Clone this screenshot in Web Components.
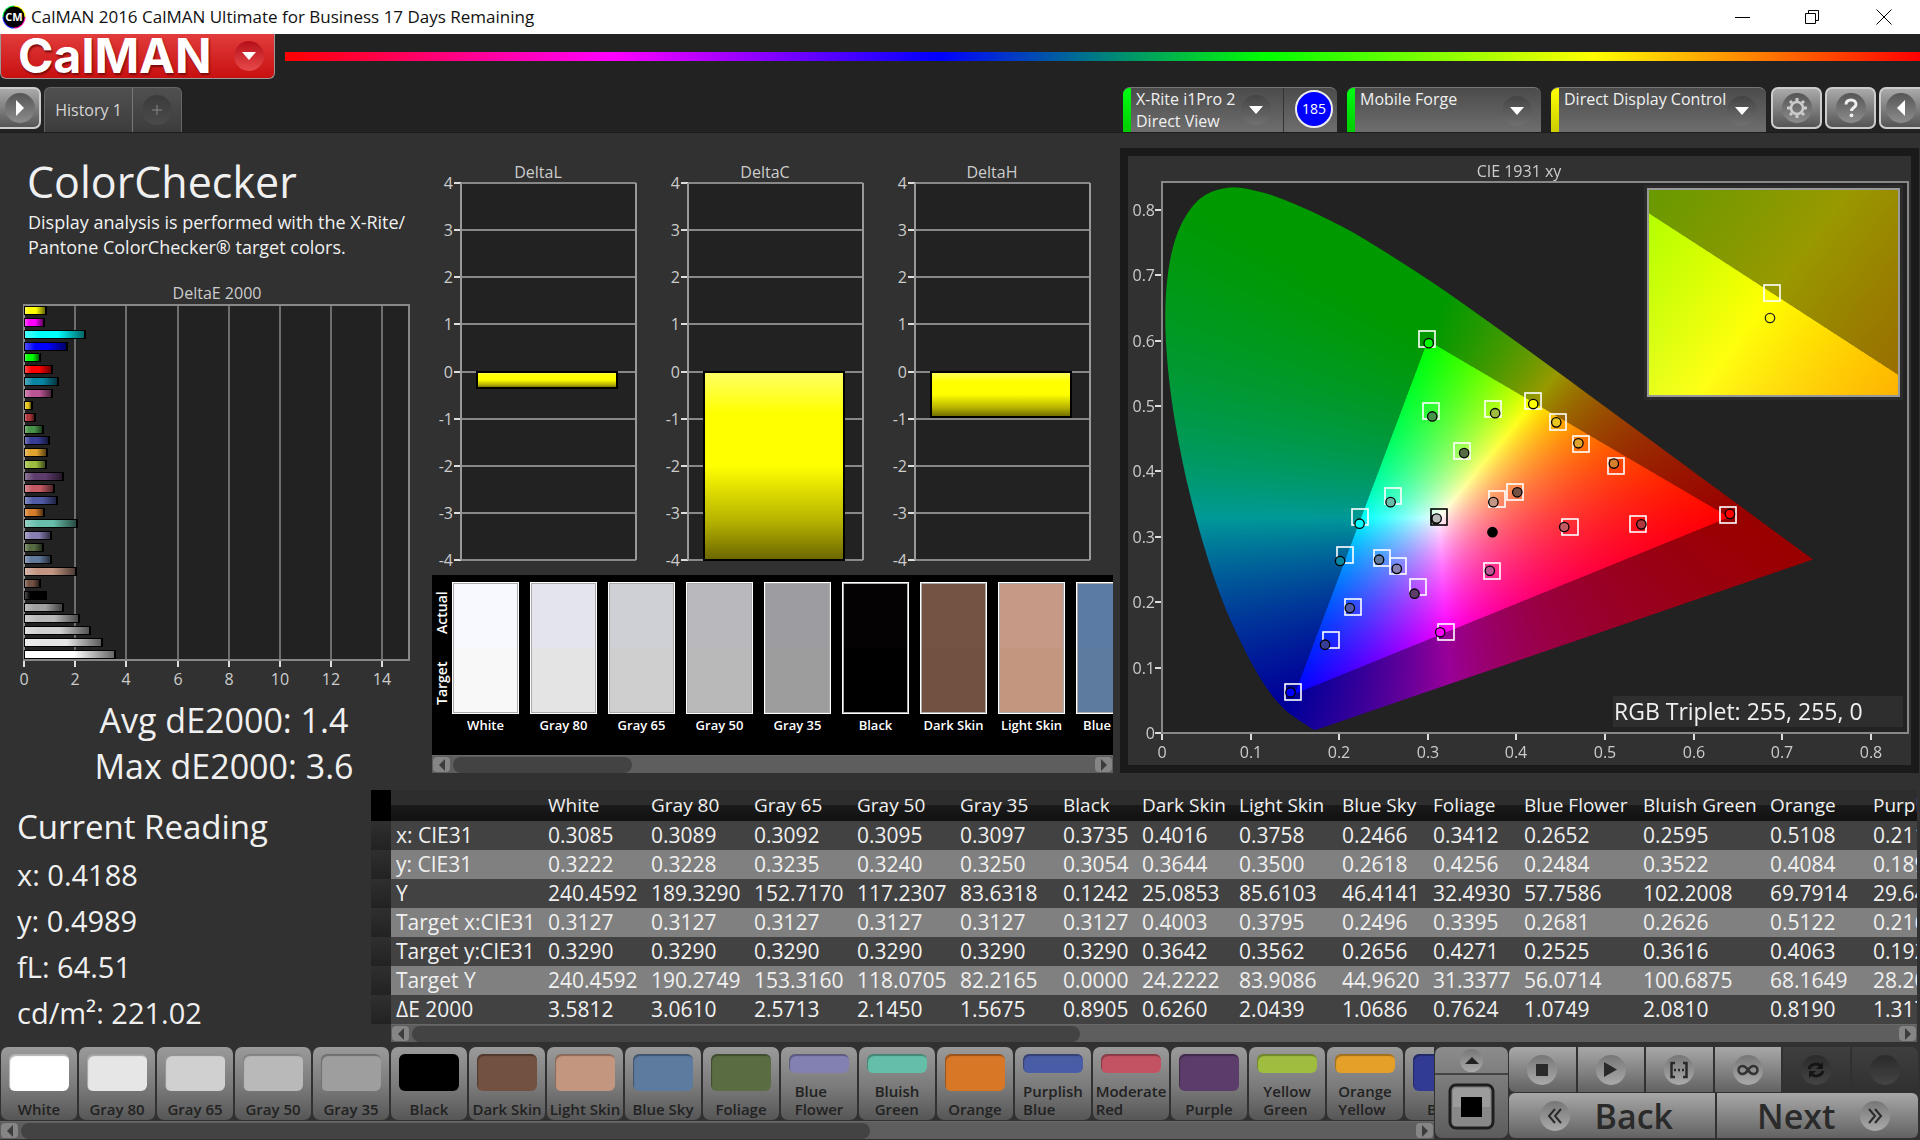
<!DOCTYPE html>
<html lang="en">
<head>
<meta charset="utf-8">
<title>CalMAN 2016 CalMAN Ultimate for Business</title>
<style>
  html, body { margin: 0; height: 100%; }
  body { background: #313131; color: #f0f0f0; font-family: "Open Sans", "Noto Sans", sans-serif; overflow: hidden; }
</style>
</head>
<body>
<cal-app></cal-app>
<script>
const BASE = `
  *, *::before, *::after { box-sizing: border-box; }
  button, select { font: inherit; color: inherit; border: 0; margin: 0; padding: 0; background: none; }
  svg { display: block; }
`;

class CalElement extends HTMLElement {
  connectedCallback() {
    if (this.shadowRoot) return;
    this.attachShadow({ mode: 'open' });
    this.shadowRoot.innerHTML = `<style>${BASE}${this.styles()}</style>${this.markup()}`;
    this.ready();
  }
  styles() { return ''; }
  markup() { return ''; }
  ready() {}
}

const READINGS = {
  names: ['White', 'Gray 80', 'Gray 65', 'Gray 50', 'Gray 35', 'Black', 'Dark Skin', 'Light Skin', 'Blue Sky', 'Foliage', 'Blue Flower', 'Bluish Green', 'Orange', 'Purplish Blue'],
  widths: [103, 103, 103, 103, 103, 79, 97, 103, 91, 91, 119, 127, 103, 120],
  rows: [
    ['x: CIE31', '0.3085', '0.3089', '0.3092', '0.3095', '0.3097', '0.3735', '0.4016', '0.3758', '0.2466', '0.3412', '0.2652', '0.2595', '0.5108', '0.2117'],
    ['y: CIE31', '0.3222', '0.3228', '0.3235', '0.3240', '0.3250', '0.3054', '0.3644', '0.3500', '0.2618', '0.4256', '0.2484', '0.3522', '0.4084', '0.1893'],
    ['Y', '240.4592', '189.3290', '152.7170', '117.2307', '83.6318', '0.1242', '25.0853', '85.6103', '46.4141', '32.4930', '57.7586', '102.2008', '69.7914', '29.6441'],
    ['Target x:CIE31', '0.3127', '0.3127', '0.3127', '0.3127', '0.3127', '0.3127', '0.4003', '0.3795', '0.2496', '0.3395', '0.2681', '0.2626', '0.5122', '0.2162'],
    ['Target y:CIE31', '0.3290', '0.3290', '0.3290', '0.3290', '0.3290', '0.3290', '0.3642', '0.3562', '0.2656', '0.4271', '0.2525', '0.3616', '0.4063', '0.1925'],
    ['Target Y', '240.4592', '190.2749', '153.3160', '118.0705', '82.2165', '0.0000', '24.2222', '83.9086', '44.9620', '31.3377', '56.0714', '100.6875', '68.1649', '28.2051'],
    ['ΔE 2000', '3.5812', '3.0610', '2.5713', '2.1450', '1.5675', '0.8905', '0.6260', '2.0439', '1.0686', '0.7624', '1.0749', '2.0810', '0.8190', '1.3170']
  ]
};

/* ---------- Scroll bar ---------- */
customElements.define('cal-scrollbar', class extends CalElement {
  styles() { return `
    :host { display: flex; align-items: center; height: 18px; padding: 1px; background: #5e5e5e; border-top: 1px solid #686868; }
    button { width: 17px; height: 15px; border-radius: 4px; background: #858585; display: grid; place-items: center; flex: none; }
    .track { flex: 1; height: 16px; margin: 0 3px; }
    .thumb { width: var(--thumb, 30%); height: 16px; border-radius: 8px; background: #434343; }
  `; }
  markup() { return `
    <button aria-label="Scroll left"><svg width="8" height="12"><path d="M7 0v12L1 6z" fill="#3c3c3c"/></svg></button>
    <div class="track"><div class="thumb"></div></div>
    <button aria-label="Scroll right"><svg width="8" height="12"><path d="M1 0v12l6-6z" fill="#3c3c3c"/></svg></button>
  `; }
});

/* ---------- Window title bar ---------- */
customElements.define('cal-titlebar', class extends CalElement {
  styles() { return `
    :host { display: flex; align-items: center; height: 34px; background: #fff; color: #111; font-size: 17px; padding-left: 2px; }
    .name { flex: 1; padding-left: 5px; line-height: 34px; }
    button { width: 70px; height: 34px; display: grid; place-items: center; }
    button:last-child { width: 73px; }
    button svg { stroke: #000; fill: none; }
  `; }
  markup() { return `
    <svg width="24" height="24" viewBox="0 0 24 24" aria-hidden="true">
      <path d="M12 1.500A10.500 10.500 0 0 1 22.500 12" stroke="#ff0" stroke-width="2" fill="none"/>
      <path d="M22.500 12A10.500 10.500 0 0 1 12 22.500" stroke="#f0a" stroke-width="2" fill="none"/>
      <path d="M12 22.500A10.500 10.500 0 0 1 1.500 12" stroke="#22f" stroke-width="2" fill="none"/>
      <path d="M1.500 12A10.500 10.500 0 0 1 12 1.500" stroke="#0e4" stroke-width="2" fill="none"/>
      <circle cx="12" cy="12" r="10.500"/>
      <text x="12" y="16" text-anchor="middle" font-size="11" font-weight="700" fill="#fff">CM</text>
    </svg>
    <span class="name"><slot></slot></span>
    <button aria-label="Minimize"><svg width="16" height="16"><path d="M1 8.500h15"/></svg></button>
    <button aria-label="Restore"><svg width="16" height="16"><path d="M1.500 4.500h10v10h-10zM4.500 4.500v-3h10v10h-3"/></svg></button>
    <button aria-label="Close"><svg width="16" height="16"><path d="M.500.500l15 15M15.500.500l-15 15"/></svg></button>
  `; }
});

/* ---------- Logo strip, workflow tabs and device menus ---------- */
customElements.define('cal-header', class extends CalElement {
  styles() { return `
    :host { display: block; background: #222; }
    .brand { display: flex; align-items: flex-start; gap: 10px; height: 53px; }
    .logo { display: flex; align-items: center; justify-content: space-between; width: 275px; height: 45px; padding: 0 10px 0 17px; border: 1px solid #999; border-top: 0; border-radius: 0 0 6px 6px;
      background: linear-gradient(#e23c3c, #c81010); color: #fff; font: 700 48px/40px Inter, "Open Sans", sans-serif; text-shadow: 1px 2px 2px #7a0a0a; }
    .knob { display: grid; place-items: center; width: 30px; height: 30px; border-radius: 50%; flex: none; background: linear-gradient(#444, #707070); }
    .logo .knob { background: linear-gradient(#b40f18, #e84a4a); }
    .rainbow { flex: 1; height: 9px; margin-top: 18px; background: linear-gradient(90deg, #f00, #f0f, #00f, #0f0, #ff0, #f00); }
    .bar { display: flex; height: 45px; font-size: 16px; line-height: 22px; }
    .sq { width: 51px; height: 42px; display: grid; place-items: center; border: 2px solid #ccc; border-radius: 7px; background: linear-gradient(#aaa, #555); }
    .sq .knob { background: linear-gradient(#555, #8d8d8d); }
    .first { width: 41px; border-left: 0; border-radius: 0 7px 7px 0; margin-right: 3px; }
    .last { width: 41px; border-right: 0; border-radius: 7px 0 0 7px; }
    .tabs { display: flex; border: 1px solid #666; border-bottom: 0; border-radius: 6px 6px 0 0; background: linear-gradient(#505050, #3c3c3c); color: #d5d5d5; }
    .tabs button { width: 87px; }
    .tabs .add { width: 49px; border-left: 1px solid #777; display: grid; place-items: center; }
    .tabs .knob { background: linear-gradient(#3b3b3b, #4b4b4b); }
    .space { flex: 1; }
    .dev { display: flex; height: 45px; border-radius: 7px 7px 0 0; overflow: hidden; border-top: 1px solid #777; background: linear-gradient(#4b4b4b, #6e6e6e); margin-right: 10px; position: relative; }
    .dev::before { content: ""; width: 8px; background: var(--led); flex: none; }
    .meter { display: flex; align-items: center; width: 153px; padding: 0 12px 0 5px; text-align: left; justify-content: space-between; border-right: 1px solid #333; white-space: nowrap; }
    .badge { width: 38px; height: 38px; margin: 2px 0 0 11px; border-radius: 50%; border: 2px solid #eee; background: #00f; font-size: 14px; line-height: 34px; text-align: center; color: #fff; }
    select { appearance: none; width: 100%; height: 22px; padding: 0 5px; line-height: 22px; }
    .dev .over { position: absolute; right: 9px; top: 8px; pointer-events: none; }
    .dev.end { margin-right: 5px; }
    .tools { display: flex; gap: 3px; }
  `; }
  markup() {
    const down = '<span class="knob"><svg width="14" height="10"><path d="M0 1h14L7 9z" fill="#fff"/></svg></span>';
    return `
    <div class="brand">
      <button class="logo">CalMAN${down}</button>
      <div class="rainbow"></div>
    </div>
    <nav class="bar">
      <button class="sq first" aria-label="Show workflow"><span class="knob"><svg width="10" height="16"><path d="M1 0v16l8-8z" fill="#fff"/></svg></span></button>
      <div class="tabs"><button>History 1</button><button class="add" aria-label="Add history"><span class="knob"><svg width="12" height="12"><path d="M6 1v10M1 6h10" stroke="#888"/></svg></span></button></div>
      <span class="space"></span>
      <div class="dev" style="--led:linear-gradient(#0f1,#0c0);width:214px"><button class="meter"><span>X-Rite i1Pro 2<br>Direct View</span>${down}</button><span class="badge">185</span></div>
      <div class="dev" style="--led:linear-gradient(#0f1,#0c0);width:194px"><select aria-label="Source"><option>Mobile Forge</option></select><span class="knob over"><svg width="14" height="10"><path d="M0 1h14L7 9z" fill="#fff"/></svg></span></div>
      <div class="dev end" style="--led:linear-gradient(#ff0,#cc0);width:215px"><select aria-label="Display"><option>Direct Display Control</option></select><span class="knob over"><svg width="14" height="10"><path d="M0 1h14L7 9z" fill="#fff"/></svg></span></div>
      <div class="tools">
        <button class="sq" aria-label="Settings"><span class="knob"><svg width="22" height="22" viewBox="-11 -11 22 22" fill="none" stroke="#ccc"><circle r="6" stroke-width="2.500"/><g stroke-width="3"><path d="M0-7v-3M0 7v3M7 0h3M-7 0h-3M5 5l2 2M-5-5l-2-2M5-5l2-2M-5 5l-2 2"/></g></svg></span></button>
        <button class="sq" aria-label="Help"><span class="knob"><svg width="16" height="20" viewBox="0 0 16 20"><path d="M3 6.500C3 3.500 5 2 8 2s5 1.700 5 4.300C13 9.500 8.500 9.500 8.500 13" fill="none" stroke="#eee" stroke-width="3"/><circle cx="8.500" cy="17.300" r="1.900" fill="#eee"/></svg></span></button>
        <button class="sq last" aria-label="Collapse"><span class="knob"><svg width="10" height="16"><path d="M9 0v16L1 8z" fill="#fff"/></svg></span></button>
      </div>
    </nav>`;
  }
});

/* ---------- Horizontal DeltaE bar chart ---------- */
customElements.define('cal-deltae-chart', class extends CalElement {
  styles() { return `
    :host { display: block; }
    svg { width: 100%; }
    text { font-size: 16px; fill: #ccc; text-anchor: middle; }
  `; }
  markup() {
    const bars = [['#ffff00', .88], ['#ff00ff', .82], ['#00ffff', 2.43], ['#0000ff', 1.7], ['#00ff00', .66], ['#ff0000', 1.15], ['#0885a1', 1.38], ['#bb5695', 1.15], ['#e7c71f', .37], ['#af363c', .48], ['#469449', .8], ['#383d96', 1.03], ['#e0a32e', .95], ['#9dbc40', .9], ['#5e3c6c', 1.58], ['#c15a63', 1.22], ['#505ba6', 1.34], ['#d67e2c', .82], ['#67bdaa', 2.12], ['#8580b1', 1.1], ['#576c43', .78], ['#627a9d', 1.1], ['#c29682', 2.08], ['#735244', .66], ['#000000', .89], ['#a0a0a0', 1.58], ['#b9b9b9', 2.18], ['#d0d0d0', 2.6], ['#e6e6e6', 3.08], ['#ffffff', 3.58]];
    let s = '<rect x="24" y="26" width="385" height="355" fill="#222" stroke="#888" stroke-width="2"/>';
    for (let v = 0; v <= 14; v += 2) {
      const x = Math.round(24 + v * 25.6);
      if (v) s += `<path d="M${x} 26V381" stroke="#888" stroke-width="1.500"/>`;
      s += `<path d="M${x} 382v6" stroke="#ddd" stroke-width="2"/><text x="${x}" y="406">${v}</text>`;
    }
    bars.forEach(([c, v], i) => {
      const y = Math.round(31 + i * 11.86) - 4, w = Math.round(v * 25.6);
      s += `<rect x="24" y="${y}" width="${w}" height="9" fill="#000"/><rect x="25" y="${y + 1}" width="${w - 3}" height="7" fill="${c}"/><rect x="25" y="${y + 1}" width="${w - 3}" height="7" fill="url(#shade)"/>`;
    });
    return `<svg viewBox="0 0 432 412" role="img" aria-label="DeltaE 2000">
      <defs><linearGradient id="shade"><stop offset="0" stop-color="#fff" stop-opacity=".3"/><stop offset=".25" stop-color="#fff" stop-opacity="0"/><stop offset=".55" stop-color="#000" stop-opacity="0"/><stop offset="1" stop-color="#000" stop-opacity=".6"/></linearGradient></defs>
      <text x="217" y="20">DeltaE 2000</text>${s}</svg>`;
  }
});

/* ---------- Vertical delta chart, -4 to 4 ---------- */
customElements.define('cal-delta-chart', class extends CalElement {
  styles() { return `
    :host { display: block; flex: 1; min-width: 0; }
    svg { width: 100%; }
    text { font-size: 16px; fill: #ccc; }
  `; }
  markup() {
    const v = Number(this.getAttribute('value')), name = this.getAttribute('name');
    const y = n => Math.round(211.5 - n * 47.1);
    let s = '';
    for (let n = 4; n >= -4; n--) s += `<path d="M29 ${y(n)}H204" stroke="#888" stroke-width="2"/><path d="M22 ${y(n)}h7" stroke="#ddd" stroke-width="2"/><text x="21" y="${y(n) + 6}" text-anchor="end">${n}</text>`;
    const h = y(Math.max(v, -4)) - y(0);
    return `<svg viewBox="0 0 227 415" role="img" aria-label="${name}">
      <defs><linearGradient id="g" x2="0" y2="1"><stop offset="0" stop-color="#ff6"/><stop offset=".22" stop-color="#ff0"/><stop offset=".5" stop-color="#ff0"/><stop offset=".8" stop-color="#b4b000"/><stop offset="1" stop-color="#6a6600"/></linearGradient></defs>
      <rect x="29" y="23" width="175" height="377" fill="#222"/>
      ${s}<path d="M29 23V400M204 23V400" stroke="#999" stroke-width="2"/>
      <rect x="45" y="${y(0)}" width="140" height="${h}" fill="url(#g)" stroke="#000" stroke-width="2"/>
      <text x="106" y="18" text-anchor="middle">${name}</text></svg>`;
  }
});

/* ---------- Actual / target swatches ---------- */
customElements.define('cal-swatches', class extends CalElement {
  styles() { return `
    :host { display: block; background: #000; }
    .view { display: flex; height: 180px; padding-top: 7px; overflow: hidden; }
    .side { display: flex; flex-direction: column; width: 20px; height: 140px; margin-top: -4px; flex: none; font-size: 14px; font-weight: 600; line-height: 20px; color: #fff; }
    .side span { flex: 1; writing-mode: vertical-rl; transform: rotate(180deg); text-align: center; }
    figure { margin: 0 11px 0 0; width: 67px; flex: none; }
    .chip { height: 132px; border: 1px solid #fff; box-shadow: inset 0 0 0 1px #aaa; }
    figcaption { font-size: 13px; font-weight: 600; line-height: 22px; text-align: center; white-space: nowrap; color: #fff; }
  `; }
  markup() {
    const chips = [['White', '#f8f9ff', '#f8f8f8'], ['Gray 80', '#e4e4ec', '#e4e4e4'], ['Gray 65', '#cfcfd6', '#cfcfcf'], ['Gray 50', '#b8b8bd', '#b9b9b9'], ['Gray 35', '#9d9da1', '#9d9d9d'], ['Black', '#040203', '#000'], ['Dark Skin', '#745342', '#735141'], ['Light Skin', '#c69886', '#c39680'], ['Blue Sky', '#5c7ba4', '#5d7b9e']];
    return `<div class="view"><div class="side"><span>Actual</span><span>Target</span></div>
      ${chips.map(([n, a, t]) => `<figure><div class="chip" style="background:linear-gradient(${a} 50%,${t} 50%)"></div><figcaption>${n}</figcaption></figure>`).join('')}
    </div><cal-scrollbar style="--thumb:28%"></cal-scrollbar>`;
  }
});

/* ---------- CIE 1931 chromaticity chart ---------- */
const LOCUS = [[.1741, .005], [.1714, .0051], [.1689, .0069], [.1644, .0109], [.1566, .0177], [.144, .0297], [.1355, .0399], [.1241, .0578], [.1096, .0868], [.0913, .1327], [.0687, .2007], [.0454, .295], [.0235, .4127], [.0082, .5384], [.0039, .6548], [.0139, .7502], [.0389, .812], [.0743, .8338], [.1142, .8262], [.1547, .8059], [.1929, .7816], [.2296, .7543], [.3016, .6923], [.3731, .6245], [.4441, .5547], [.5125, .4866], [.5752, .4242], [.627, .3725], [.6915, .3083], [.7347, .2653]];

/* Display colour of a chromaticity; outside the Rec.709 gamut it is dimmed. */
function chromaColor(x, y) {
  const X = x / y, Z = (1 - x - y) / y;
  const r = 3.2406 * X - 1.5372 - .4986 * Z, g = -.9689 * X + 1.8758 + .0415 * Z, b = .0557 * X - .204 + 1.057 * Z;
  const k = (Math.min(r, g, b) < 0 ? 153 : 255) / Math.max(r, g, b);
  return [Math.max(0, r * k), Math.max(0, g * k), Math.max(0, b * k)];
}

customElements.define('cal-cie-chart', class extends CalElement {
  styles() { return `
    :host { display: block; background: #313131; border: 8px solid #1a1a1a; }
    .stack { display: grid; }
    .stack > * { grid-area: 1 / 1; width: 100%; }
    .axis text { font-size: 16px; fill: #ccc; }
    .triplet { font-size: 23px; fill: #f0f0f0; }
  `; }
  markup() {
    const px = x => 34 + x * 886, py = y => 577 - y * 654;
    const targets = [[.299, .602], [.304, .493], [.374, .496], [.419, .507], [.447, .476], [.473, .442], [.512, .409], [.339, .431], [.261, .363], [.224, .33], [.378, .358], [.398, .368], [.461, .315], [.537, .319], [.639, .333], [.206, .272], [.248, .267], [.266, .256], [.289, .223], [.373, .248], [.216, .193], [.191, .142], [.32, .155], [.148, .062]];
    const actual = [[.301, .596, '#00ff00'], [.305, .484, '#469449'], [.376, .489, '#9dbc40'], [.419, .503, '#ffff00'], [.445, .475, '#e7c71f'], [.47, .443, '#e0a32e'], [.51, .412, '#d67e2c'], [.341, .428, '#576c43'], [.258, .353, '#67bdaa'], [.223, .32, '#00ffff'], [.374, .353, '#c29682'], [.401, .368, '#735244'], [.309, .327, '#888888'], [.31, .328, '#b9b9b9'], [.373, .307, '#000000'], [.454, .315, '#c15a63'], [.541, .319, '#af363c'], [.641, .335, '#ff0000'], [.201, .263, '#0885a1'], [.245, .265, '#627a9d'], [.265, .251, '#8580b1'], [.285, .213, '#5e3c6c'], [.37, .248, '#bb5695'], [.212, .191, '#505ba6'], [.184, .135, '#383d96'], [.314, .154, '#ff00ff'], [.145, .062, '#0000ff']];
    const box = (x, y, c) => `<rect x="${Math.round(x) - 8}" y="${Math.round(y) - 8}" width="16" height="16" fill="none" stroke="${c}" stroke-width="1.600"/>`;
    let s = '';
    for (let i = 0; i <= 8; i++) {
      const x = Math.round(px(i / 10)), y = Math.round(py(i / 10)), t = i ? '0.' + i : '0';
      s += `<path d="M${x} 578v6M34 ${y}h-7" stroke="#ddd" stroke-width="2"/><text x="${x}" y="602" text-anchor="middle">${t}</text><text x="27" y="${y + 6}" text-anchor="end">${t}</text>`;
    }
    return `<div class="stack">
      <canvas width="1566" height="1218"></canvas>
      <svg viewBox="0 0 783 609" role="img" aria-label="CIE 1931 xy">
        <g class="axis"><text x="391" y="21" text-anchor="middle">CIE 1931 xy</text>${s}</g>
        <rect x="34" y="26" width="746" height="551" fill="none" stroke="#888" stroke-width="2"/>
        ${targets.map(([x, y]) => box(px(x), py(y), '#fff')).join('')}
        ${box(px(.313), py(.33), '#000')}
        ${actual.map(([x, y, c]) => `<circle cx="${px(x)}" cy="${py(y)}" r="4.700" fill="${c}" stroke="#000" stroke-width="1.300"/>`).join('')}
        <rect x="520" y="33" width="251" height="207" fill="none" stroke="#999" stroke-width="2"/>
        ${box(644, 137, '#fff')}<circle cx="642" cy="162" r="4.700" fill="#ff0" stroke="#222" stroke-width="1.300"/>
        <rect x="485" y="540" width="290" height="31" fill="#2e2e2e"/>
        <text class="triplet" x="486" y="564">RGB Triplet: 255, 255, 0</text>
      </svg></div>`;
  }
  ready() {
    const c = this.shadowRoot.querySelector('canvas'), g = c.getContext('2d');
    g.scale(2, 2);
    g.fillStyle = '#222';
    g.fillRect(34, 26, 746, 551);
    const paint = (left, top, w, h, toX, toY) => {
      const layer = document.createElement('canvas');
      layer.width = w * 2; layer.height = h * 2;
      const lc = layer.getContext('2d'), img = lc.createImageData(w * 2, h * 2);
      for (let j = 0, k = 0; j < h * 2; j++) for (let i = 0; i < w * 2; i++, k += 4) {
        const rgb = chromaColor(toX(left + (i + .5) / 2), Math.max(.001, toY(top + (j + .5) / 2)));
        img.data[k] = rgb[0]; img.data[k + 1] = rgb[1]; img.data[k + 2] = rgb[2]; img.data[k + 3] = 255;
      }
      lc.putImageData(img, 0, 0);
      g.drawImage(layer, left, top, w, h);
    };
    const p = LOCUS.map(([x, y]) => [34 + x * 886, 577 - y * 654]);
    g.save();
    g.beginPath();
    g.moveTo(...p[0]);
    for (let i = 0; i < p.length - 1; i++) {
      const a = p[Math.max(0, i - 1)], b = p[i], d = p[i + 1], e = p[Math.min(p.length - 1, i + 2)];
      g.bezierCurveTo(b[0] + (d[0] - a[0]) / 6, b[1] + (d[1] - a[1]) / 6, d[0] - (e[0] - b[0]) / 6, d[1] - (e[1] - b[1]) / 6, d[0], d[1]);
    }
    g.closePath();
    g.clip();
    paint(34, 26, 746, 551, x => (x - 34) / 886, y => (577 - y) / 654);
    g.restore();
    g.fillStyle = '#2b2b2b';
    g.fillRect(516, 29, 259, 215);
    paint(520, 33, 251, 207, x => .4193 + (x - 644) / 4840, y => .5053 - (y - 137) / 3950);
  }
});

/* ---------- Current reading ---------- */
customElements.define('cal-reading', class extends CalElement {
  styles() { return `
    :host { display: block; padding: 15px 0 0 17px; font-size: 29px; line-height: 46px; }
    h2 { margin: 0 0 2px; font-size: 33px; line-height: 46px; font-weight: 400; }
    p { margin: 0; }
  `; }
  markup() { return '<h2>Current Reading</h2><p>x: 0.4188</p><p>y: 0.4989</p><p>fL: 64.51</p><p>cd/m²: 221.02</p>'; }
});

/* ---------- Readings table ---------- */
customElements.define('cal-readings-table', class extends CalElement {
  styles() { return `
    :host { display: block; min-width: 0; padding-top: 1px; }
    .view { overflow: hidden; }
    table { border-collapse: collapse; table-layout: fixed; width: 1617px; font-size: 21px; }
    th, td { padding: 0 0 0 5px; text-align: left; font-weight: 400; white-space: nowrap; overflow: hidden; height: 29px; line-height: 29px; }
    thead th { height: 31px; font-size: 19px; line-height: 31px; background: linear-gradient(#2d2d2d 50%, #1a1a1a 50%, #111); }
    thead td { background: #000; }
    tbody tr { background: #424242; }
    tbody tr:nth-child(even) { background: #808080; }
    tbody td.grip { background: linear-gradient(#2f2f2f, #222); }
    cal-scrollbar { margin-left: 20px; }
  `; }
  markup() {
    return `<div class="view"><table>
      <colgroup><col style="width:20px"><col style="width:152px">${READINGS.widths.map(w => `<col style="width:${w}px">`).join('')}</colgroup>
      <thead><tr><td></td><th></th>${READINGS.names.map(n => `<th scope="col">${n}</th>`).join('')}</tr></thead>
      <tbody>${READINGS.rows.map(([h, ...r]) => `<tr><td class="grip"></td><th scope="row">${h}</th>${r.map(v => `<td>${v}</td>`).join('')}</tr>`).join('')}</tbody>
    </table></div><cal-scrollbar style="--thumb:45%"></cal-scrollbar>`;
  }
});

/* ---------- Patch strip ---------- */
customElements.define('cal-patch-strip', class extends CalElement {
  styles() { return `
    :host { display: block; min-width: 0; flex: 1; }
    .view { display: flex; gap: 2px; height: 74px; padding-left: 1px; overflow: hidden; }
    button { display: flex; flex-direction: column; align-items: center; width: 76px; height: 73px; flex: none; padding: 7px 0 2px; border-radius: 7px; background: linear-gradient(#9a9a9a, #7a7a7a 55%, #565656); color: #222; font-size: 15px; font-weight: 600; line-height: 18px; }
    i { width: 60px; flex: 1; border-radius: 6px; background: var(--c); box-shadow: inset 1px 2px 1px rgba(0, 0, 0, .3); }
    span { padding-top: 9px; text-align: left; white-space: pre; }
  `; }
  markup() {
    const patches = [['White', '#fff'], ['Gray 80', '#e6e6e6'], ['Gray 65', '#d0d0d0'], ['Gray 50', '#b9b9b9'], ['Gray 35', '#9e9e9e'], ['Black', '#000'], ['Dark Skin', '#735141'], ['Light Skin', '#c39680'], ['Blue Sky', '#5d7b9e'], ['Foliage', '#5a6c42'], ['Blue\nFlower', '#8380b2'], ['Bluish\nGreen', '#64bea8'], ['Orange', '#d87827'], ['Purplish\nBlue', '#495ca6'], ['Moderate\nRed', '#c35362'], ['Purple', '#5c3c6a'], ['Yellow\nGreen', '#9fbd3f'], ['Orange\nYellow', '#e5a02a'], ['Blue', '#323b94']];
    return `<div class="view">${patches.map(([n, c]) => `<button style="--c:${c}"><i></i><span>${n}</span></button>`).join('')}</div>
      <cal-scrollbar style="--thumb:61%"></cal-scrollbar>`;
  }
});

/* ---------- Measurement controls ---------- */
customElements.define('cal-transport', class extends CalElement {
  styles() { return `
    :host { display: flex; gap: 1px; width: 485px; height: 91px; flex: none; padding-right: 2px; color: #2a2a2a; }
    .target { width: 73px; display: flex; flex-direction: column; border-radius: 7px; overflow: hidden; background: linear-gradient(#8c8c8c, #5c5c5c); }
    .target button { display: grid; place-items: center; }
    .up { height: 28px; border-bottom: 2px solid #444; }
    .up .knob { width: 23px; height: 23px; }
    .patch { flex: 1; }
    .controls { flex: 1; display: grid; grid-template-rows: 45px 45px; gap: 1px; }
    .row { display: flex; gap: 2px; }
    .row button { flex: 1; display: grid; place-items: center; background: linear-gradient(#a8a8a8, #626262); }
    .row button:first-child { border-radius: 6px 0 0 6px; }
    .row button:last-child { border-radius: 0 6px 6px 0; }
    .knob { display: grid; place-items: center; width: 30px; height: 30px; border-radius: 50%; background: linear-gradient(#777, #aaa); }
    .row button:disabled { background: linear-gradient(#3f3f3f, #303030); }
    button:disabled .knob { background: linear-gradient(#2b2b2b, #444); }
    .nav button { display: flex; align-items: center; justify-content: space-between; font-size: 34px; font-weight: 600; line-height: 44px; padding: 0 42px 0 31px; }
    .nav .next { padding: 0 28px 0 40px; }
  `; }
  markup() {
    const b = (label, icon, off = '') => `<button aria-label="${label}" ${off}><span class="knob">${icon}</span></button>`;
    return `
    <div class="target">
      <button class="up" aria-label="Expand"><span class="knob"><svg width="14" height="8"><path d="M0 8l7-7 7 7z" fill="#222"/></svg></span></button>
      <button class="patch" aria-label="Pattern window"><svg width="48" height="48"><rect x="2" y="2" width="43" height="43" rx="6" fill="#888" stroke="#1e1e1e" stroke-width="3"/><path d="M5 24V9q0-4 4-4h29q4 0 4 4v15z" fill="#9c9c9c"/><path d="M13 14h21v20H13z"/></svg></button>
    </div>
    <div class="controls">
      <div class="row">
        ${b('Stop', '<svg width="12" height="12"><path d="M0 0h12v12H0z" fill="#2a2a2a"/></svg>')}
        ${b('Play', '<svg width="13" height="15"><path d="M0 0v15l13-7.500z" fill="#2a2a2a"/></svg>')}
        ${b('Read series', '<svg width="20" height="18" fill="none" stroke="#2a2a2a" stroke-width="2.500"><path d="M6 2H2.500v14H6M14 2h3.500v14H14"/><path d="M5 9h10" stroke-dasharray="2 2"/></svg>')}
        ${b('Continuous', '<svg width="22" height="12" fill="none" stroke="#333" stroke-width="2.500"><path d="M11 6C9 3 7.500 2 5.500 2a4 4 0 0 0 0 8C7.500 10 9 9 11 6S14.500 2 16.500 2a4 4 0 0 1 0 8C14.500 10 13 9 11 6z"/></svg>')}
        ${b('Repeat', '<svg width="20" height="20" fill="none" stroke="#151515" stroke-width="3"><path d="M3 9a7 6 0 0 1 12-3M17 11a7 6 0 0 1-12 3"/><path d="M17 2v7h-7zM3 18v-7h7z" fill="#151515" stroke="none"/></svg>', 'disabled')}
        ${b('Record', '', 'disabled')}
      </div>
      <div class="row nav">
        <button><span class="knob"><svg width="16" height="16" fill="none" stroke="#2a2a2a" stroke-width="2"><path d="M8 1L2 8l6 7M14 1L8 8l6 7"/></svg></span>Back</button>
        <button class="next">Next<span class="knob"><svg width="16" height="16" fill="none" stroke="#2a2a2a" stroke-width="2"><path d="M8 1l6 7-6 7M2 1l6 7-6 7"/></svg></span></button>
      </div>
    </div>`;
  }
});

/* ---------- Application shell ---------- */
customElements.define('cal-app', class extends CalElement {
  styles() { return `
    :host { display: flex; flex-direction: column; height: 100%; }
    .top { display: grid; grid-template-columns: 432px 681px 1fr; padding-right: 1px; border-top: 1px solid #1c1c1c; }
    .summary { padding-top: 23px; }
    h1 { margin: 0 0 0 27px; font-size: 43px; line-height: 52px; font-weight: 400; }
    .lead { margin: 2px 0 0 28px; font-size: 18px; line-height: 25px; white-space: nowrap; }
    cal-deltae-chart { margin-top: 19px; }
    .totals { margin: 6px 0 0 16px; text-align: center; font-size: 34px; line-height: 46px; }
    .totals p { margin: 0; }
    .deltas { display: flex; padding-top: 27px; }
    .cie { padding: 15px 0 0 7px; }
    .bottom { display: grid; grid-template-columns: 371px 1fr; padding-right: 3px; flex: 1; }
    footer { display: flex; gap: 1px; height: 93px; }
  `; }
  markup() { return `
    <cal-titlebar>CalMAN 2016 CalMAN Ultimate for Business 17 Days Remaining</cal-titlebar>
    <cal-header></cal-header>
    <main class="top">
      <section class="summary">
        <h1>ColorChecker</h1>
        <p class="lead">Display analysis is performed with the X-Rite/<br>Pantone ColorChecker® target colors.</p>
        <cal-deltae-chart></cal-deltae-chart>
        <div class="totals"><p>Avg dE2000: 1.4</p><p>Max dE2000: 3.6</p></div>
      </section>
      <section>
        <div class="deltas">
          <cal-delta-chart name="DeltaL" value="-0.36"></cal-delta-chart>
          <cal-delta-chart name="DeltaC" value="-4.6"></cal-delta-chart>
          <cal-delta-chart name="DeltaH" value="-0.97"></cal-delta-chart>
        </div>
        <cal-swatches></cal-swatches>
      </section>
      <section class="cie"><cal-cie-chart></cal-cie-chart></section>
    </main>
    <section class="bottom">
      <cal-reading></cal-reading>
      <cal-readings-table></cal-readings-table>
    </section>
    <footer><cal-patch-strip></cal-patch-strip><cal-transport></cal-transport></footer>
  `; }
});
</script>
</body>
</html>
